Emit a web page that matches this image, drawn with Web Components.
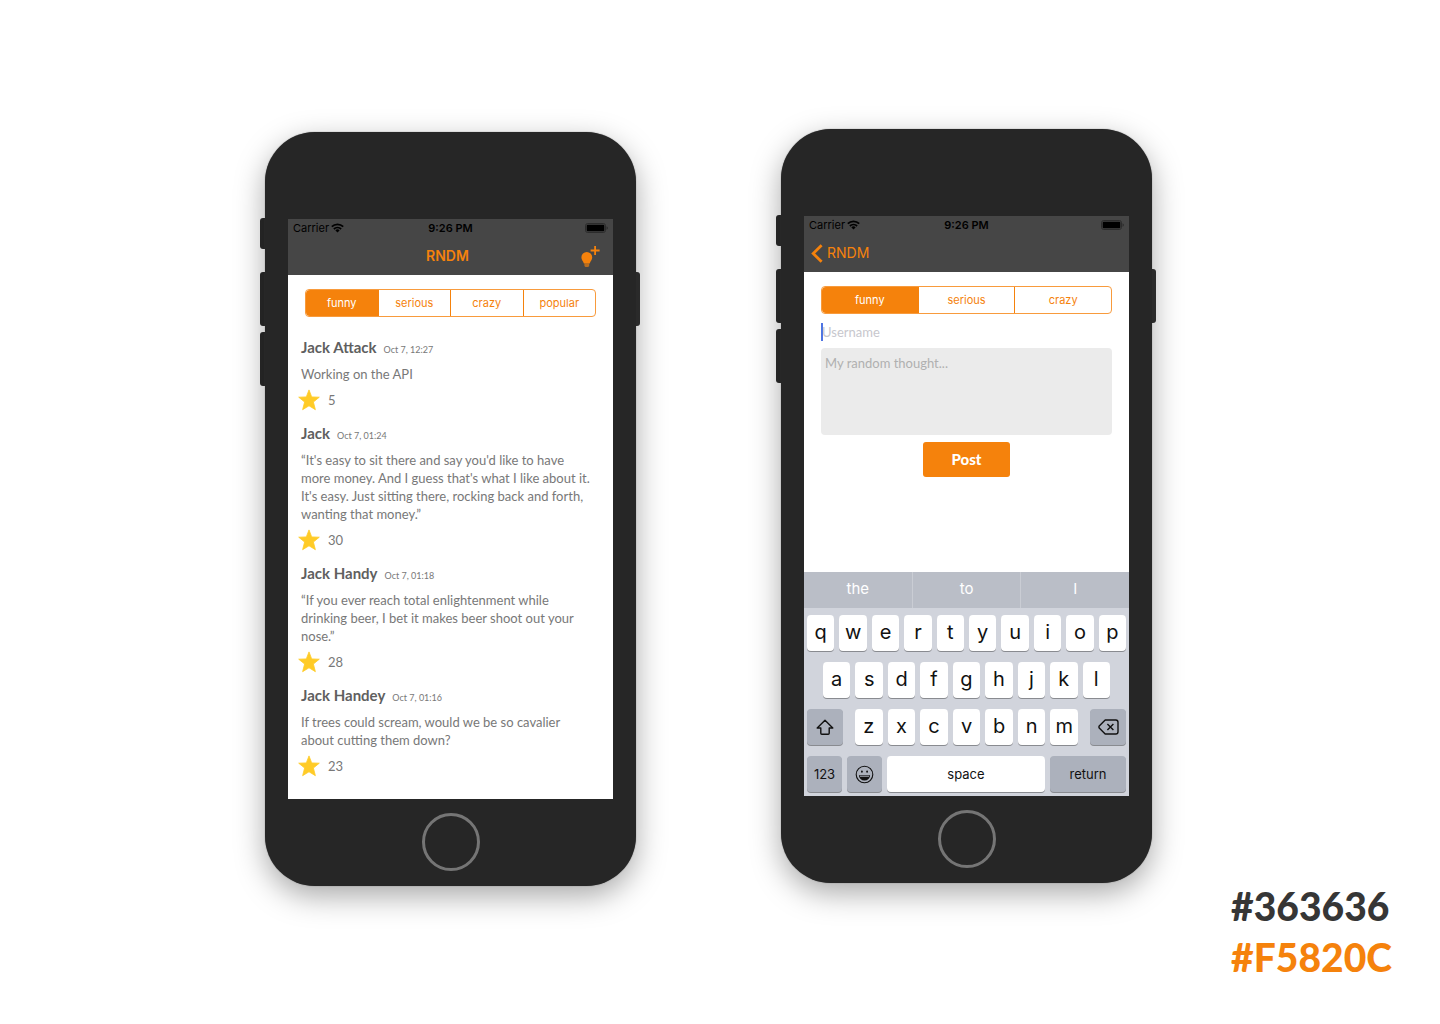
<!DOCTYPE html>
<html lang="en">
<head>
<meta charset="utf-8">
<title>RNDM</title>
<style>
  body { margin: 0; background: #fff; font-family: Inter, "Liberation Sans", sans-serif; }
</style>
</head>
<body>
<rndm-showcase></rndm-showcase>
<script>
const define = (name, html, setup) => {
  const template = document.createElement('template');
  template.innerHTML = '<style>*{box-sizing:border-box}</style>' + html;
  customElements.define(name, class extends HTMLElement {
    connectedCallback() {
      if (this.shadowRoot) return;
      const root = this.attachShadow({ mode: 'open' });
      root.append(template.content.cloneNode(true));
      if (setup) setup(this, root);
    }
  });
};

/* Device frame: side keys, body, home button; the screen goes in the slot */
define('phone-frame', `
<style>
  :host { display: grid; grid-template-columns: 5px 371px 5px; }
  .rail { display: flex; flex-direction: column; gap: 6px; padding-top: 86px; }
  .rail i { height: 54px; background: #2a2a2a; }
  .left i { border-radius: 3px 0 0 3px; }
  .left i:first-child { height: 31px; margin-bottom: 17px; }
  .right { padding-top: 140px; }
  .right i { width: 4px; border-radius: 0 3px 3px 0; }
  .body { display: flex; flex-direction: column; align-items: center; padding: 87px 23px 15px; border-radius: 50px;
          background: #262626; box-shadow: 0 0 1px #555, 0 10px 30px rgba(0,0,0,.34); }
  .screen { display: flex; flex-direction: column; width: 100%; min-height: 580px; background: #fff; }
  .home { width: 58px; height: 58px; margin-top: 14px; padding: 0; border: 3px solid #757575; border-radius: 50%; background: none; }
</style>
<div class="rail left"><i></i><i></i><i></i></div>
<div class="body"><div class="screen"><slot></slot></div><button class="home" aria-label="Home"></button></div>
<div class="rail right"><i></i></div>`);

define('status-bar', `
<style>
  :host { display: grid; grid-template-columns: 1fr auto 1fr; align-items: center; height: 18px; padding: 0 5px; color: #000;
          background: #464646; font-size: 11px; line-height: 18px; }
  .carrier { display: flex; align-items: center; gap: 2px; }
  b { font-weight: 600; }
  .battery { justify-self: end; }
  svg { display: block; }
</style>
<span class="carrier">Carrier
  <svg width="13" height="10" viewBox="0 0 13 10" fill="none" stroke="#000" stroke-width="1.8"><path d="M.8 3.7a8.2 8.2 0 0 1 11.4 0M2.9 6a5.2 5.2 0 0 1 7.2 0"/><path d="M6.5 9.4 4.4 7.4a3 3 0 0 1 4.2 0z" fill="#000" stroke="none"/></svg>
</span>
<b>9:26 PM</b>
<svg class="battery" width="23" height="10" viewBox="0 0 23 10"><rect x=".5" y=".5" width="20" height="9" rx="2.2" fill="none" stroke="#2c2c2c"/><rect x="1.7" y="1.7" width="17.6" height="6.6" rx="1" fill="#000"/><path d="M21.5 3.2q1.4.5 1.4 1.8t-1.4 1.8z" fill="#2c2c2c"/></svg>`);

define('nav-bar', `
<style>
  :host { display: grid; grid-template-columns: 1fr auto 1fr; align-items: center; height: 38px; padding: 0 13px 0 7px;
          background: #464646; color: #f5820c; font-size: 14px; line-height: 20px; }
  h1 { margin: 0; font-size: 14px; font-weight: 600; }
  .end { justify-self: end; }
</style>
<slot name="start"><span></span></slot><h1><slot></slot></h1><span class="end"><slot name="end"></slot></span>`);

define('back-link', `
<style>
  :host { display: block; }
  a { display: flex; align-items: center; gap: 4px; color: #f5820c; text-decoration: none; }
</style>
<a href="#"><svg width="12" height="19" viewBox="0 0 12 19" fill="none" stroke="#f5820c" stroke-width="2.8"><path d="M10.6 1.2 2.2 9.5l8.4 8.3"/></svg><slot></slot></a>`);

define('add-thought', `
<style>
  :host { display: block; }
  button { display: block; padding: 0; border: 0; background: none; }
  svg { display: block; }
</style>
<button aria-label="Add a thought"><svg width="20" height="23" viewBox="0 0 20 23" fill="#f5820c"><path d="M6.8 7a5.4 5.4 0 0 0-5.4 5.4c0 2.5 1.7 3.3 2.5 6.1h5.8c.8-2.8 2.5-3.6 2.5-6.1A5.4 5.4 0 0 0 6.8 7z"/><path d="M4.4 18.5h4.8v2.4l-1 1H5.4l-1-1z" opacity=".65"/><path d="M14.2 1h1.8v3.6h3.6v1.8H16V10h-1.8V6.4h-3.6V4.6h3.6z"/></svg></button>`);

define('segment-control', `
<style>
  :host { display: block; font-family: Inter, "Liberation Sans", sans-serif; }
  fieldset { display: flex; height: 28px; margin: 0; padding: 0; border: 1px solid #f89b3d; border-radius: 4px; overflow: hidden; }
  label { flex: 1 1 0; display: flex; align-items: center; justify-content: center; color: #f5820c; font-size: 11px; line-height: 16px; }
  label + label { border-left: 1px solid #f5820c; }
  label:has(input:checked) { background: #f5820c; color: #fff; }
  input { appearance: none; width: 0; height: 0; margin: 0; }
</style>
<fieldset aria-label="Category"></fieldset>`, (host, root) => {
  const set = root.querySelector('fieldset');
  host.getAttribute('options').split(' ').forEach((name, i) => {
    const label = document.createElement('label');
    const input = document.createElement('input');
    input.type = 'radio'; input.name = 'category'; input.value = name; input.checked = i === 0;
    label.append(input, name);
    set.append(label);
  });
});

define('thought-card', `
<style>
  :host { display: block; color: #787878; font-family: Lato, sans-serif; }
  header { display: flex; align-items: baseline; gap: 7px; height: 20px; }
  h2 { margin: 0; font-size: 15px; line-height: 20px; font-weight: 700; color: #5f5f5f; }
  time { font-size: 9px; line-height: 12px; }
  p { margin: 8px 0 5px; font-size: 13px; line-height: 18px; white-space: pre-line; }
  footer { display: flex; align-items: center; gap: 8px; height: 24px; margin-left: -3px; font-size: 13px; line-height: 18px; }
  button { display: block; padding: 0; border: 0; background: none; }
  svg { display: block; }
</style>
<header><h2></h2><time></time></header>
<p><slot></slot></p>
<footer><button aria-label="Like"><svg width="22" height="22" viewBox="0 0 22 22" fill="#ffcb27" stroke="#ffcb27" stroke-width=".8" stroke-linejoin="round"><path d="m11 .9 2.7 7 7.6.3-5.9 4.8 2 7.7L11 16.8l-6.4 3.9 2-7.7L.7 8.2l7.6-.3z"/></svg></button><span></span></footer>`, (host, root) => {
  root.querySelector('h2').textContent = host.getAttribute('author');
  root.querySelector('time').textContent = host.getAttribute('date');
  root.querySelector('span').textContent = host.getAttribute('likes');
});

define('thought-form', `
<style>
  :host { display: block; }
  form { display: flex; flex-direction: column; align-items: center; }
  segment-control { width: 100%; }
  input, textarea { display: block; width: 100%; margin: 0; border: 0; font: 13px/18px Lato, sans-serif; color: #5f5f5f; }
  input { height: 18px; margin: 9px 0 7px; padding: 0 0 0 1px; background: linear-gradient(#4f74e3, #4f74e3) no-repeat 0 0 / 2px 100%; }
  textarea { height: 87px; padding: 6px 4px; border-radius: 4px; background: #ebebeb; resize: none; }
  input::placeholder { color: #c7c7cd; }
  textarea::placeholder { color: #b0b0b0; }
  button { width: 87px; height: 35px; margin-top: 7px; padding: 0 0 2px; border: 0; border-radius: 3px; background: #f5820c; color: #fff; font: 900 15px/20px Lato, sans-serif; }
</style>
<form>
  <segment-control options="funny serious crazy"></segment-control>
  <input type="text" aria-label="Username" placeholder="Username">
  <textarea aria-label="Thought" placeholder="My random thought..."></textarea>
  <button type="button">Post</button>
</form>`);

define('soft-keyboard', `
<style>
  :host { display: block; background: #d1d4dc; color: #111; }
  button { flex: 1 1 0; min-width: 0; padding: 0; border: 0; font: inherit; color: inherit; }
  .hints { display: flex; height: 36px; background: #babec7; color: #fff; font-size: 15px; }
  .hints button { background: none; padding-bottom: 3px; }
  .hints button + button { border-left: 1px solid #cacdd4; }
  .keys { display: flex; flex-direction: column; gap: 11px; padding: 7px 3px 4px; }
  .row { display: flex; gap: 5px; height: 36px; font-size: 20px; line-height: 24px; }
  .row button { display: flex; align-items: center; justify-content: center; border-radius: 4px; background: #fff; box-shadow: 0 1px 0 #898b90; }
  .row .letter { padding-bottom: 2px; }
  .inset { padding: 0 16px; }
  .row .fn { background: #acb1bc; }
  .row .wide { flex: 0 0 36px; }
  .last .wide { flex-basis: 35px; }
  .shift { margin-right: 7px; }
  .delete { margin-left: 7px; }
  .last { font-size: 13px; }
  .row .return { flex: 0 0 76px; }
  svg { display: block; fill: none; stroke: #111; stroke-width: 1.4; }
</style>
<div class="hints"><button>the</button><button>to</button><button>I</button></div>
<div class="keys">
  <div class="row" data-keys="qwertyuiop"></div>
  <div class="row inset" data-keys="asdfghjkl"></div>
  <div class="row">
    <button class="fn wide shift" aria-label="Shift"><svg width="18" height="17" viewBox="0 0 18 17" stroke-linejoin="round"><path d="M9 1.2 1.2 9h3.6v5.2q0 1 1 1h6.4q1 0 1-1V9h3.6z"/></svg></button>
    <div data-keys="zxcvbnm" style="display:contents"></div>
    <button class="fn wide delete" aria-label="Delete"><svg width="21" height="16" viewBox="0 0 21 16" stroke-linejoin="round"><path d="M7.2 1h10.6q2.2 0 2.2 2.2v9.6q0 2.2-2.2 2.2H7.2L1 8.7V7.3z"/><path d="m9.4 5 6 6m0-6-6 6"/></svg></button>
  </div>
  <div class="row last">
    <button class="fn wide">123</button>
    <button class="fn wide" aria-label="Emoji"><svg width="19" height="19" viewBox="0 0 19 19"><circle cx="9.5" cy="9.5" r="8.3" style="stroke-width:1.1"/><path d="M3.9 10.2h11.2a5.6 5.2 0 0 1-11.2 0z" fill="#111" style="stroke:none"/><path d="M5 11.3h9" style="stroke:#acb1bc;stroke-width:.9"/><ellipse cx="6.9" cy="6.6" rx=".9" ry="1.2" fill="#111" style="stroke:none"/><ellipse cx="12.1" cy="6.6" rx=".9" ry="1.2" fill="#111" style="stroke:none"/></svg></button>
    <button class="space">space</button>
    <button class="fn return">return</button>
  </div>
</div>`, (host, root) => {
  root.querySelectorAll('[data-keys]').forEach(row => {
    for (const key of row.dataset.keys) {
      const button = document.createElement('button');
      button.className = 'letter';
      button.textContent = key;
      row.append(button);
    }
  });
});

define('colour-palette', `
<style>
  :host { display: flex; flex-direction: column; gap: 11px; font: 900 39px/40px Lato, sans-serif; }
  .dark { color: #363636; }
  .accent { color: #f5820c; }
</style>
<span class="dark">#363636</span><span class="accent">#F5820C</span>`);

define('rndm-showcase', `
<style>
  :host { display: flex; flex-direction: column; min-height: 100vh; }
  main { display: flex; justify-content: center; align-items: flex-start; gap: 135px; padding: 129px 23px 0 0; }
  .feed { margin-top: 3px; }
  .filter { padding: 14px 17px 20px; }
  .list { display: flex; flex-direction: column; gap: 11px; padding: 0 10px 0 13px; }
  .form { flex: 1; padding: 14px 17px; }
  colour-palette { align-self: flex-end; margin-right: 48px; }
</style>
<main>
  <phone-frame class="feed">
    <status-bar></status-bar>
    <nav-bar>RNDM<add-thought slot="end"></add-thought></nav-bar>
    <div class="filter"><segment-control options="funny serious crazy popular"></segment-control></div>
    <div class="list">
      <thought-card author="Jack Attack" date="Oct 7, 12:27" likes="5">Working on the API</thought-card>
      <thought-card author="Jack" date="Oct 7, 01:24" likes="30">“It's easy to sit there and say you'd like to have
more money. And I guess that's what I like about it.
It's easy. Just sitting there, rocking back and forth,
wanting that money.”</thought-card>
      <thought-card author="Jack Handy" date="Oct 7, 01:18" likes="28">“If you ever reach total enlightenment while
drinking beer, I bet it makes beer shoot out your
nose.”</thought-card>
      <thought-card author="Jack Handey" date="Oct 7, 01:16" likes="23">If trees could scream, would we be so cavalier
about cutting them down?</thought-card>
    </div>
  </phone-frame>
  <phone-frame>
    <status-bar></status-bar>
    <nav-bar><back-link slot="start">RNDM</back-link></nav-bar>
    <div class="form"><thought-form></thought-form></div>
    <soft-keyboard></soft-keyboard>
  </phone-frame>
</main>
<colour-palette></colour-palette>`);
</script>
</body>
</html>
